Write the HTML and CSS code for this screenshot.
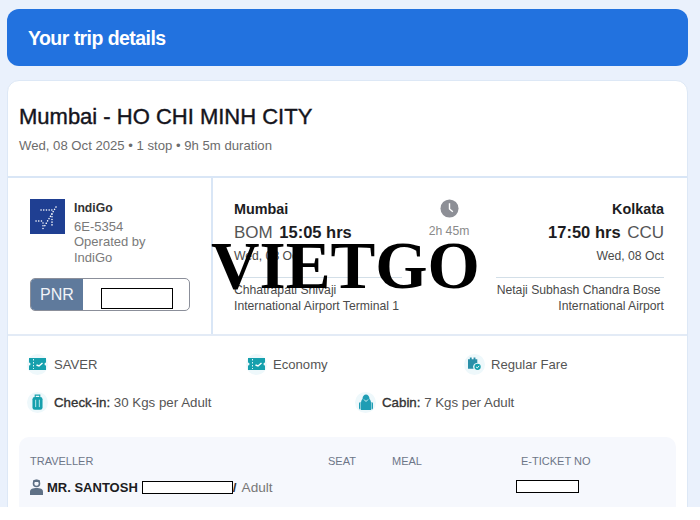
FILE: index.html
```html
<!DOCTYPE html>
<html lang="en">
<head>
    <meta charset="UTF-8">
    <title>Your trip details</title>
    <link rel="stylesheet" href="styles.css">
</head>
<body>
    <div class="page">
        <div class="header">Your trip details</div>

        <div class="card">
            <div class="summary">
                <h1 class="route">Mumbai - HO CHI MINH CITY</h1>
                <p class="trip-info">Wed, 08 Oct 2025 • 1 stop • 9h 5m duration</p>
            </div>

            <div class="flight">
                <div class="airline">
                    <div class="airline-top">
                        <svg class="logo" viewBox="0 0 35 35">
                            <rect width="35" height="35" fill="#1f3f92"/>
                            <g stroke="#fff" stroke-width="1.5" stroke-linecap="round" stroke-dasharray="0.1 2.6" fill="none">
                                <path d="M11 11H22"/>
                                <path d="M26 8L14 28"/>
                                <path d="M22 15V28"/>
                                <path d="M6 22H14"/>
                                <path d="M13 24V30"/>
                            </g>
                        </svg>
                        <div class="airline-text">
                            <div class="airline-name">IndiGo</div>
                            <div>6E-5354</div>
                            <div>Operated by</div>
                            <div>IndiGo</div>
                        </div>
                    </div>
                    <div class="pnr">
                        <span class="pnr-label">PNR</span>
                        <span class="pnr-value"><span class="redact redact-pnr"></span></span>
                    </div>
                </div>

                <div class="legs">
                    <div class="leg">
                        <div class="city">Mumbai</div>
                        <div class="time"><span class="code">BOM</span> <b>15:05 hrs</b></div>
                        <div class="date">Wed, 08 Oct</div>
                        <div class="airport">Chhatrapati Shivaji<br>International Airport Terminal 1</div>
                    </div>
                    <div class="duration">
                        <svg class="clock" viewBox="0 0 20 20">
                            <circle cx="10" cy="10" r="9.5" fill="#8d8f96"/>
                            <path d="M10 4.5V10.5L13.5 13.5" stroke="#fff" stroke-width="1.5" fill="none"/>
                        </svg>
                        <div>2h 45m</div>
                    </div>
                    <div class="leg leg-right">
                        <div class="city">Kolkata</div>
                        <div class="time"><b>17:50 hrs</b> <span class="code">CCU</span></div>
                        <div class="date">Wed, 08 Oct</div>
                        <div class="airport">Netaji Subhash Chandra Bose&nbsp;<br>International Airport</div>
                    </div>
                </div>
            </div>

            <div class="fare-row">
                <div class="tag">
                    <span class="tag-icon">
                        <svg viewBox="0 0 17 12" width="17" height="12">
                            <path d="M0 0H17V4.500A1.500 1.500 0 0 0 17 7.500V12H0V7.500A1.500 1.500 0 0 0 0 4.500Z" fill="#16a0ad"/>
                            <path d="M4.500 1V11" stroke="#d8f3f5" stroke-dasharray="1.500 1.500"/>
                            <path d="M7.500 7L10 8L13.500 5" stroke="#fff" stroke-width="1.400" fill="none"/>
                        </svg>
                    </span>
                    SAVER
                </div>
                <div class="tag">
                    <span class="tag-icon">
                        <svg viewBox="0 0 17 12" width="17" height="12">
                            <path d="M0 0H17V4.500A1.500 1.500 0 0 0 17 7.500V12H0V7.500A1.500 1.500 0 0 0 0 4.500Z" fill="#16a0ad"/>
                            <path d="M4.500 1V11" stroke="#d8f3f5" stroke-dasharray="1.500 1.500"/>
                            <path d="M7.500 7L10 8L13.500 5" stroke="#fff" stroke-width="1.400" fill="none"/>
                        </svg>
                    </span>
                    Economy
                </div>
                <div class="tag">
                    <span class="tag-icon">
                        <svg viewBox="0 0 14 14" width="13" height="14">
                            <path d="M0 2H2V0H4V2H6V0H8V2H10V6A4 4 0 0 0 6 12H0Z" fill="#2a8fa8"/>
                            <circle cx="10.300" cy="10" r="3.400" fill="#16a0ad"/>
                            <path d="M8.600 10L10 11.300L12 9" stroke="#fff" fill="none"/>
                        </svg>
                    </span>
                    Regular Fare
                </div>
            </div>

            <div class="bag-row">
                <div class="tag">
                    <span class="tag-icon">
                        <svg viewBox="0 0 12 18" width="11" height="17">
                            <path d="M3.500 3V1H8.500V3" stroke="#16a0ad" stroke-width="1.200" fill="none"/>
                            <rect x="0.500" y="3" width="11" height="14" rx="2.500" fill="#16a0ad"/>
                            <path d="M4 6V14M8 6V14" stroke="#c9eef1"/>
                        </svg>
                    </span>
                    <span><span class="bag-name">Check-in:</span> 30 Kgs per Adult</span>
                </div>
                <div class="tag">
                    <span class="tag-icon">
                        <svg viewBox="0 0 14 17" width="14" height="17">
                            <path d="M3.500 5C3.500 -1 10.500 -1 10.500 5C11.500 6 12 7 12 9V16H2V9C2 7 2.500 6 3.500 5Z" fill="#1f9db4"/>
                            <path d="M0 9.500Q0 8 1.500 8V15.500Q0 15.500 0 14ZM14 9.500Q14 8 12.500 8V15.500Q14 15.500 14 14Z" fill="#1f9db4"/>
                            <path d="M5 5.500L7 7.500L9 5.500" stroke="#d8f3f5" fill="none"/>
                        </svg>
                    </span>
                    <span><span class="bag-name">Cabin:</span> 7 Kgs per Adult</span>
                </div>
            </div>

            <div class="travellers">
                <div class="t-grid t-head">
                    <span>TRAVELLER</span>
                    <span>SEAT</span>
                    <span>MEAL</span>
                    <span>E-TICKET NO</span>
                </div>
                <div class="t-grid t-row">
                    <span class="t-name">
                        <svg class="user" viewBox="0 0 13 16" width="13" height="16">
                            <circle cx="6.500" cy="4.500" r="3" fill="none" stroke="#5f7186" stroke-width="1.600"/>
                            <path d="M3 1.500Q6.500 -0.500 10 1.500V3H3Z" fill="#5f7186"/>
                            <path d="M0 16V12.500C0 10 3 9 6.500 9S13 10 13 12.500V16Z" fill="#5f7186"/>
                        </svg>
                        <b>MR. SANTOSH</b>
                        <span class="redact redact-name"></span><span class="adult"><b>/</b> Adult</span>
                    </span>
                    <span></span>
                    <span></span>
                    <span class="redact redact-ticket"></span>
                </div>
            </div>
        </div>

        <div class="watermark">VIETGO</div>
    </div>
</body>
</html>
```

FILE: styles.css
```css
* {
    margin: 0;
    padding: 0;
    box-sizing: border-box;
}

body {
    background-color: white;
    font-family: "Liberation Sans", Arial, sans-serif;
}

.page {
    position: relative;
    width: 700px;
    height: 507px;
    overflow: hidden;
    padding: 9px 12px 0 7px;
    background-color: #eaf1fc;
}

.header {
    height: 57px;
    padding-left: 21px;
    line-height: 58px;
    font-size: 19.5px;
    font-weight: bold;
    letter-spacing: -0.55px;
    color: white;
    background-color: #2272df;
    border-radius: 12px;
}

.card {
    height: 440px;
    margin-top: 14px;
    background-color: white;
    border: 1px solid #dde8f6;
    border-radius: 12px 12px 0 0;
}

.summary {
    height: 95px;
    padding: 22px 0 0 11px;
}
.route {
    font-size: 22px;
    font-weight: normal;
    line-height: 28px;
    color: #14141c;
    -webkit-text-stroke: 0.4px #14141c;
}
.trip-info {
    margin-top: 7px;
    font-size: 13.15px;
    line-height: 16px;
    color: #6c6c6c;
}

.flight {
    display: flex;
    height: 160px;
    border-top: 2px solid #d9e6f6;
    border-bottom: 2px solid #e3ebf6;
}
.airline {
    width: 205px;
    padding: 21px 0 0 22px;
    border-right: 2px solid #d9e6f6;
}
.airline-top {
    display: flex;
    gap: 9px;
}
.logo {
    width: 35px;
    height: 35px;
    flex: none;
}
.airline-text {
    padding-top: 2px;
    font-size: 13px;
    line-height: 15.5px;
    color: #7a7a7a;
}
.airline-name {
    margin-bottom: 2px;
    font-size: 12.2px;
    font-weight: bold;
    color: #333;
}
.pnr {
    display: flex;
    width: 160px;
    height: 33px;
    margin-top: 13px;
    border: 1px solid #8b8f9a;
    border-radius: 5px;
    overflow: hidden;
}
.pnr-label {
    width: 52px;
    line-height: 31px;
    text-align: center;
    font-size: 16px;
    color: #f2f4f8;
    background-color: #5f7a9c;
}
.pnr-value {
    padding: 9px 0 0 18px;
}

.redact {
    display: block;
    background-color: white;
    border: 1px solid black;
}
.redact-pnr {
    width: 72px;
    height: 21px;
}
.redact-name {
    display: inline-block;
    width: 91px;
    height: 13px;
    margin-left: 4px;
}
.redact-ticket {
    width: 63px;
    height: 13px;
    margin: -2px 0 0 -5px;
}

.legs {
    flex: 1;
    display: flex;
    justify-content: space-between;
    padding: 22px 23px 0 21px;
}
.leg {
    width: 168px;
    font-size: 12.2px;
    color: #4a4a4a;
}
.leg-right {
    text-align: right;
}
.city {
    font-size: 14.4px;
    font-weight: bold;
    line-height: 18px;
    color: #1c1c22;
}
.time {
    margin-top: 3px;
    font-size: 16.5px;
    line-height: 22px;
    white-space: nowrap;
}
.time b {
    color: #1c1c22;
}
.code {
    margin-right: 2px;
    font-size: 17px;
    color: #555;
}
.leg-right .code {
    margin: 0 0 0 2px;
}
.date {
    margin-top: 5px;
    line-height: 15px;
}
.airport {
    margin-top: 13px;
    padding-top: 5px;
    line-height: 15.5px;
    border-top: 1px solid #d3dfe8;
    white-space: nowrap;
}
.duration {
    margin-left: 0;
    text-align: center;
    font-size: 12.2px;
    color: #8a8a8a;
}
.clock {
    display: block;
    width: 19px;
    height: 19px;
    margin: -1px auto 6px;
}

.fare-row {
    display: grid;
    grid-template-columns: 219px 218px 1fr;
    padding: 15px 0 0 19px;
}
.bag-row {
    display: grid;
    grid-template-columns: 328px 1fr;
    padding: 12px 0 0 19px;
}
.tag {
    display: flex;
    align-items: center;
    gap: 6px;
    height: 26px;
    font-size: 13.1px;
    color: #555;
}
.bag-row .tag {
    font-size: 13.3px;
}
.tag-icon {
    display: flex;
    align-items: center;
    justify-content: center;
    width: 21px;
    height: 21px;
    border-radius: 50%;
    background-color: #eef8fb;
}
.bag-name {
    color: #333;
    -webkit-text-stroke: 0.35px #333;
}

.travellers {
    height: 75px;
    margin: 22px 11px 0;
    padding: 18px 0 0 11px;
    background-color: #f6f8fd;
    border-radius: 10px 10px 0 0;
}
.t-grid {
    display: grid;
    grid-template-columns: 298px 64px 129px 1fr;
}
.t-head {
    font-size: 11px;
    line-height: 13px;
    color: #6d7688;
}
.t-row {
    margin-top: 11px;
    align-items: center;
}
.t-name {
    display: flex;
    align-items: center;
    font-size: 13px;
    color: #1c1c22;
    white-space: nowrap;
}
.user {
    flex: none;
    margin-right: 4px;
}
.adult {
    font-size: 13.6px;
    color: #777;
    word-spacing: 2px;
}
.adult b {
    color: #333;
}

.watermark {
    position: absolute;
    left: 211px;
    top: 228px;
    font-family: "Liberation Serif", serif;
    font-size: 67.2px;
    font-weight: bold;
    line-height: 76px;
    color: black;
    white-space: nowrap;
}
```
